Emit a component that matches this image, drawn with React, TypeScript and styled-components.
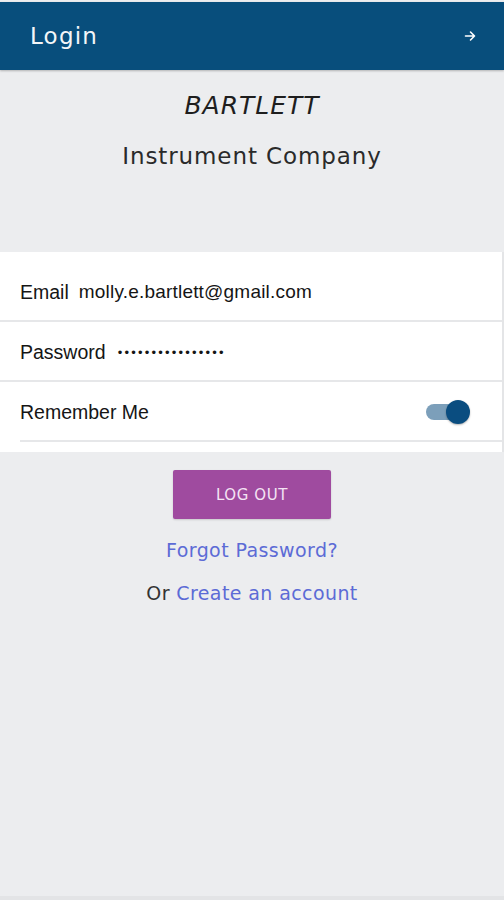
import React from "react";
import styled, { createGlobalStyle } from "styled-components";

const Global = createGlobalStyle`
  html, body { margin: 0; padding: 0; }
  body { background: #ecedef; font-family: "DejaVu Sans", sans-serif; }
`;

const Page = styled.div`
  width: 504px;
  height: 900px;
  display: flex;
  flex-direction: column;
  background: #ecedef;
  box-sizing: border-box;
  border-bottom: 4px solid #e3e4e6;
  padding-top: 2px;
`;

const Header = styled.header`
  height: 68px;
  background: #084e7c;
  display: flex;
  align-items: center;
  justify-content: space-between;
  padding: 0 28px 0 30px;
  box-shadow: 0 1px 2px rgba(0,0,0,0.25);
`;

const HeaderTitle = styled.h1`
  margin: 0;
  font-family: "DejaVu Sans", sans-serif;
  font-weight: 400;
  font-size: 23px;
  color: #f4f6f8;
  letter-spacing: 1.2px;
`;

const Brand = styled.div`
  display: flex;
  flex-direction: column;
  align-items: center;
  padding-top: 21px;
  height: 182px;
  box-sizing: border-box;
`;

const BrandName = styled.div`
  font-family: "DejaVu Sans", sans-serif;
  font-style: italic;
  font-size: 25px;
  color: #1e1e1e;
  letter-spacing: 1px;
  line-height: 30px;
`;

const BrandSub = styled.div`
  font-family: "DejaVu Sans", sans-serif;
  font-size: 23px;
  color: #2a2a2a;
  margin-top: 21px;
  letter-spacing: 0.9px;
  line-height: 28px;
`;

const Form = styled.section`
  background: #ffffff;
  border-right: 2px solid #e4e5e7;
  height: 200px;
  display: flex;
  flex-direction: column;
`;

const Row = styled.div<{ $inset?: boolean; $h: number; $top?: number }>`
  height: ${(p) => p.$h}px;
  box-sizing: border-box;
  display: flex;
  align-items: center;
  padding: ${(p) => p.$top ?? 0}px 32px 0 ${(p) => (p.$inset ? 0 : 20)}px;
  margin-left: ${(p) => (p.$inset ? "20px" : "0")};
  border-bottom: 2px solid #e6e7e9;
  font-family: "Liberation Sans", Arial, sans-serif;
  font-size: 19.5px;
  color: #151515;
`;

const Label = styled.span<{ $gap: number }>`
  margin-right: ${(p) => p.$gap}px;
`;

const Value = styled.span<{ $dots?: boolean }>`
  letter-spacing: ${(p) => (p.$dots ? "2.2px" : "0.2px")};
  font-size: ${(p) => (p.$dots ? "13px" : "19px")};
`;

const Spacer = styled.div`
  flex: 1;
`;

const Toggle = styled.div`
  position: relative;
  width: 44px;
  height: 24px;
  display: flex;
  align-items: center;
`;

const Track = styled.div`
  width: 34px;
  height: 16px;
  border-radius: 8px;
  background: #7c9fba;
`;

const Knob = styled.div`
  position: absolute;
  right: 0;
  top: 0;
  width: 24px;
  height: 24px;
  border-radius: 50%;
  background: #0a4d80;
  box-shadow: 0 1px 2px rgba(0,0,0,0.3);
`;

const Actions = styled.div`
  display: flex;
  flex-direction: column;
  align-items: center;
  padding-top: 18px;
`;

const Button = styled.button`
  width: 158px;
  height: 49px;
  background: #9f4b9f;
  border: none;
  border-radius: 2px;
  color: #f4e4f4;
  font-family: "DejaVu Sans", sans-serif;
  font-size: 15px;
  letter-spacing: 0.6px;
  box-shadow: 0 1px 2px rgba(0,0,0,0.15);
`;

const Link = styled.a`
  color: #5c6bd6;
  text-decoration: none;
`;

const LinkLine = styled.div<{ $mt: number }>`
  margin-top: ${(p) => p.$mt}px;
  font-family: "DejaVu Sans", sans-serif;
  font-size: 19px;
  line-height: 22px;
  color: #333;
  letter-spacing: 0.4px;
`;

export default function App() {
  return (
    <>
      <Global />
      <Page>
        <Header>
          <HeaderTitle>Login</HeaderTitle>
          <svg width="12" height="12" viewBox="0 0 12 12" fill="none" stroke="#ffffff" strokeWidth="1.6" strokeLinecap="round" strokeLinejoin="round">
            <path d="M1.5 6h9M6.5 2l4 4-4 4" />
          </svg>
        </Header>
        <Brand>
          <BrandName>BARTLETT</BrandName>
          <BrandSub>Instrument Company</BrandSub>
        </Brand>
        <Form>
          <Row $h={70} $top={12}>
            <Label $gap={10}>Email</Label>
            <Value>molly.e.bartlett@gmail.com</Value>
          </Row>
          <Row $h={60} $top={2}>
            <Label $gap={12}>Password</Label>
            <Value $dots>••••••••••••••••</Value>
          </Row>
          <Row $h={60} $top={2} $inset>
            <Label $gap={0}>Remember Me</Label>
            <Spacer />
            <Toggle>
              <Track />
              <Knob />
            </Toggle>
          </Row>
        </Form>
        <Actions>
          <Button>LOG OUT</Button>
          <LinkLine $mt={20}>
            <Link>Forgot Password?</Link>
          </LinkLine>
          <LinkLine $mt={21}>
            Or <Link>Create an account</Link>
          </LinkLine>
        </Actions>
      </Page>
    </>
  );
}
